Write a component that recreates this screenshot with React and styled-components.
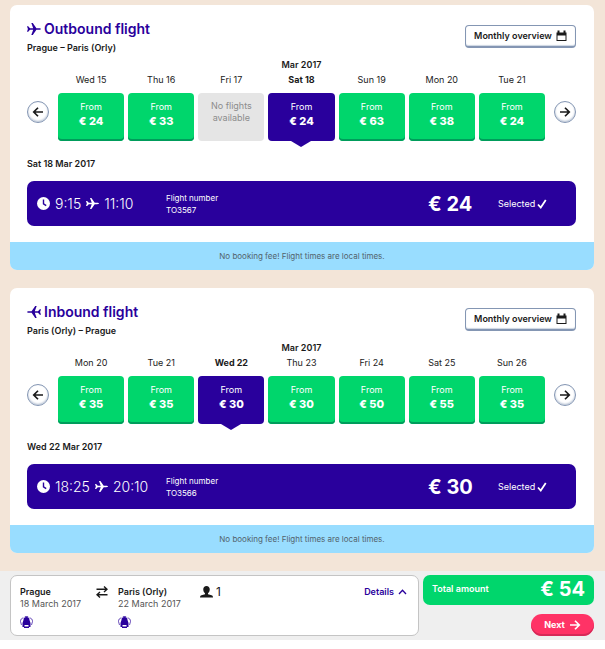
import React from "react";
import styled, { createGlobalStyle, css } from "styled-components";

const color = {
  sand: "#f3e5d8",
  indigo: "#29009c",
  green: "#00d66c",
  greenDark: "#009c5b",
  sky: "#99ddff",
  pink: "#ff3366",
  steel: "#8496b3",
  ink: "#1a1a1a",
};

const GlobalStyle = createGlobalStyle`
  * { box-sizing: border-box; }
  body {
    margin: 0;
    background: #fff;
    color: ${color.ink};
    font-family: Inter, "Open Sans", sans-serif;
    font-size: 9px;
    line-height: 12px;
  }
  button { font: inherit; color: inherit; padding: 0; border: 0; cursor: pointer; }
  h2, p { margin: 0; }
  svg { display: block; flex: none; }
`;

const Main = styled.main`
  display: flex;
  flex-direction: column;
  gap: 18px;
  padding: 5px 11px 18px 10px;
  background: ${color.sand};
`;

const Card = styled.section`
  background: #fff;
  border-radius: 7px;
  overflow: hidden;
`;

const CardBody = styled.div`
  padding: 14px 18px 16px 17px;
`;

const CardHeader = styled.header`
  display: flex;
  justify-content: space-between;
  align-items: flex-start;
`;

const Title = styled.h2`
  display: flex;
  align-items: center;
  gap: 3px;
  color: ${color.indigo};
  font-size: 14px;
  line-height: 20px;
  font-weight: 600;
`;

const Route = styled.p`
  margin-top: 3px;
  font-weight: 600;
`;

const OverviewButton = styled.button`
  display: flex;
  align-items: center;
  justify-content: center;
  gap: 4px;
  width: 111px;
  height: 23px;
  margin-top: 6px;
  background: #fff;
  border: 1px solid ${color.steel};
  border-bottom-width: 2px;
  border-radius: 4px;
  box-shadow: inset 0 -1px 1px #ccd5e2;
  font-weight: 600;
`;

const Calendar = styled.div`
  display: flex;
  align-items: flex-end;
  gap: 9px;
  margin-top: 5px;
`;

const RoundButton = styled.button`
  display: grid;
  place-items: center;
  flex: none;
  width: 22px;
  height: 22px;
  margin-bottom: 18px;
  background: #fff;
  border: 1px solid ${color.steel};
  border-radius: 50%;
  box-shadow: inset 0 -1px 2px #b5c1d3;
`;

const Days = styled.div`
  flex: 1;
  display: grid;
  grid-template-columns: repeat(7, 1fr);
  column-gap: 4px;
`;

const Month = styled.div`
  grid-column: 1 / -1;
  text-align: center;
  font-weight: 600;
  padding-bottom: 3px;
`;

const Day = styled.div`
  display: flex;
  flex-direction: column;
  gap: 7px;
  text-align: center;
  font-weight: ${(p) => (p.$selected ? 700 : 400)};
`;

const Fare = styled.button`
  position: relative;
  height: 48px;
  padding-bottom: 5px;
  border-radius: 4px;
  color: #fff;
  font-weight: 400;
  background: ${color.green};
  box-shadow: inset 0 -2px 0 ${color.greenDark};

  &:disabled {
    background: #e5e5e5;
    color: #8c8c8c;
    box-shadow: none;
    padding-bottom: 10px;
    cursor: default;
  }

  ${(p) =>
    p.$selected &&
    css`
      background: ${color.indigo};
      box-shadow: none;
      &::after {
        content: "";
        position: absolute;
        top: 100%;
        left: 50%;
        margin-left: -10px;
        border: 10px solid transparent;
        border-top: 6px solid ${color.indigo};
        border-bottom: 0;
      }
    `}
`;

const FarePrice = styled.strong`
  display: block;
  font-size: 11px;
  line-height: 16px;
  font-weight: 800;
`;

const DateLine = styled.p`
  margin-top: 17px;
  font-weight: 600;
`;

const FlightBar = styled.div`
  display: grid;
  grid-template-columns: 129px 1fr 70px 78px;
  align-items: center;
  height: 45px;
  margin-top: 11px;
  padding-left: 10px;
  border-radius: 7px;
  background: ${color.indigo};
  color: #fff;
`;

const Times = styled.div`
  display: flex;
  align-items: center;
  gap: 5px;
  font-size: 14px;
  line-height: 18px;
  font-weight: 300;
`;

const FlightNumber = styled.div`
  font-size: 8px;
`;

const FlightPrice = styled.strong`
  font-size: 20px;
  line-height: 24px;
  font-weight: 700;
`;

const Selected = styled.span`
  display: flex;
  align-items: center;
  gap: 2px;
`;

const Notice = styled.p`
  padding: 8px;
  text-align: center;
  font-size: 8px;
  background: ${color.sky};
  color: #52636c;
`;

const Footer = styled.footer`
  display: flex;
  gap: 4px;
  padding: 4px 11px 4px 10px;
  background: #efefef;
`;

const Summary = styled.div`
  flex: 1;
  display: grid;
  grid-template-columns: 76px 22px 82px 1fr auto;
  align-items: start;
  height: 61px;
  padding: 10px 11px 0 9px;
  border: 1px solid #c4c4c4;
  border-radius: 7px;
  background: #fff;
`;

const Stop = styled.div`
  white-space: nowrap;
  color: #555;
`;

const StopName = styled.strong`
  display: block;
  color: ${color.ink};
  font-weight: 600;
`;

const Bag = styled.div`
  padding-top: 6px;
`;

const Passengers = styled.div`
  display: flex;
  align-items: center;
  gap: 3px;
  font-size: 12px;
`;

const DetailsButton = styled.button`
  display: flex;
  align-items: center;
  gap: 4px;
  background: none;
  color: ${color.indigo};
  font-weight: 600;
`;

const Checkout = styled.div`
  display: flex;
  flex-direction: column;
  justify-content: space-between;
  align-items: flex-end;
  width: 171px;
`;

const Total = styled.div`
  display: flex;
  align-items: center;
  justify-content: space-between;
  width: 100%;
  height: 30px;
  padding: 0 9px 2px;
  border-radius: 7px;
  background: ${color.green};
  color: #fff;
  font-weight: 600;
`;

const NextButton = styled.button`
  display: flex;
  align-items: center;
  justify-content: center;
  gap: 4px;
  width: 63px;
  height: 22px;
  border-radius: 11px;
  background: ${color.pink};
  box-shadow: inset 0 -2px 0 #d62a58;
  color: #fff;
  font-weight: 700;
`;

const Plane = ({ size = 14, back = false }) => (
  <svg width={size} height={size} viewBox="0 0 28 28" fill="currentColor" aria-hidden="true">
    <path
      transform={back ? "translate(28 0) scale(-1 1)" : undefined}
      d="M0 8.500h2.400l3.600 4h6.400L8.600 2h3l7.200 10.300 5.400.2c2 .1 3.800.7 3.800 1.500s-1.800 1.400-3.800 1.500l-5.400.2L11.600 26h-3l3.800-10.500H6l-3.600 4H0L1.800 14z"
    />
  </svg>
);

const Clock = () => (
  <svg width="13" height="13" viewBox="0 0 24 24" aria-hidden="true">
    <circle cx="12" cy="12" r="12" fill="#fff" />
    <path d="M12 4.500v8l5 3.500" fill="none" stroke={color.indigo} strokeWidth="2.600" />
  </svg>
);

const Arrow = ({ left = false, size = 12 }) => (
  <svg width={size} height={size} viewBox="0 0 24 24" fill="none" stroke="currentColor" strokeWidth="3.400" aria-hidden="true">
    <path d={left ? "M22 12H4M12 3.500L3.500 12l8.500 8.500" : "M2 12h18M12 3.500l8.500 8.500-8.500 8.500"} />
  </svg>
);

const CalendarIcon = () => (
  <svg width="11" height="12" viewBox="0 0 22 24" aria-hidden="true">
    <path fill="currentColor" fillRule="evenodd" d="M1 5h2V1h4v4h8V1h4v4h2v17H1zM3 11v9h16v-9z" />
  </svg>
);

const Check = () => (
  <svg width="10" height="10" viewBox="0 0 20 20" fill="none" stroke="currentColor" strokeWidth="3.600" aria-hidden="true">
    <path d="M2 11l5.500 6L17.500 2" />
  </svg>
);

const Swap = () => (
  <svg width="12" height="12" viewBox="0 0 24 24" fill="none" stroke="currentColor" strokeWidth="2.800" aria-hidden="true">
    <path d="M1 6.500h20M16 1l6 5.500-6 5.500M23 17.500H3M8 12l-6 5.500L8 23" />
  </svg>
);

const Person = () => (
  <svg width="13" height="12" viewBox="0 0 26 24" fill="currentColor" aria-hidden="true">
    <path d="M13 0c4 0 6.500 2.600 6.500 6.500 0 3.500-1.500 6.500-3.500 8v2l7 2.200c2 .7 3 2.300 3 4.300H0c0-2 1-3.600 3-4.300l7-2.200v-2c-2-1.500-3.500-4.500-3.500-8C6.500 2.600 9 0 13 0z" />
  </svg>
);

const Chevron = () => (
  <svg width="9" height="6" viewBox="0 0 18 12" fill="none" stroke="currentColor" strokeWidth="2.600" aria-hidden="true">
    <path d="M2 10l7-7.500 7 7.500" />
  </svg>
);

const Backpack = () => (
  <svg width="13" height="12" viewBox="0 0 26 24" aria-hidden="true">
    <g fill="none" stroke={color.indigo} strokeWidth="1.400">
      <path d="M7 4C3 4 1 7 1 11l2 7M19 4c4 0 6 3 6 7l-2 7" />
      <path d="M10.500 3V1h5v2" />
    </g>
    <path fill={color.indigo} d="M7 8c0-4 2.500-6 6-6s6 2 6 6l2 6v8h-3v2H8v-2H5v-8z" />
    <path fill="#fff" d="M9 18h8v3H9z" />
  </svg>
);

const flights = [
  {
    title: "Outbound flight",
    route: "Prague – Paris (Orly)",
    selected: 3,
    days: [["Wed 15", 24], ["Thu 16", 33], ["Fri 17", null], ["Sat 18", 24], ["Sun 19", 63], ["Mon 20", 38], ["Tue 21", 24]],
    date: "Sat 18 Mar 2017",
    departs: "9:15",
    arrives: "11:10",
    number: "TO3567",
  },
  {
    title: "Inbound flight",
    route: "Paris (Orly) – Prague",
    back: true,
    selected: 2,
    days: [["Mon 20", 35], ["Tue 21", 35], ["Wed 22", 30], ["Thu 23", 30], ["Fri 24", 50], ["Sat 25", 55], ["Sun 26", 35]],
    date: "Wed 22 Mar 2017",
    departs: "18:25",
    arrives: "20:10",
    number: "TO3566",
  },
];

function FlightCard({ flight }) {
  return (
    <Card>
      <CardBody>
        <CardHeader>
          <div>
            <Title>
              <Plane back={flight.back} />
              {flight.title}
            </Title>
            <Route>{flight.route}</Route>
          </div>
          <OverviewButton>
            Monthly overview
            <CalendarIcon />
          </OverviewButton>
        </CardHeader>
        <Calendar>
          <RoundButton aria-label="Previous days"><Arrow left /></RoundButton>
          <Days>
            <Month>Mar 2017</Month>
            {flight.days.map(([label, price], i) => {
              const selected = i === flight.selected;
              return (
                <Day key={label} $selected={selected}>
                  <span>{label}</span>
                  <Fare $selected={selected} aria-pressed={selected} disabled={price === null}>
                    {price === null ? (
                      <>No flights<br />available</>
                    ) : (
                      <>From<FarePrice>€ {price}</FarePrice></>
                    )}
                  </Fare>
                </Day>
              );
            })}
          </Days>
          <RoundButton aria-label="Next days"><Arrow /></RoundButton>
        </Calendar>
        <DateLine>{flight.date}</DateLine>
        <FlightBar>
          <Times>
            <Clock />
            <span>{flight.departs}</span>
            <Plane size={13} />
            <span>{flight.arrives}</span>
          </Times>
          <FlightNumber>Flight number<br />{flight.number}</FlightNumber>
          <FlightPrice>€ {flight.days[flight.selected][1]}</FlightPrice>
          <Selected>Selected <Check /></Selected>
        </FlightBar>
      </CardBody>
      <Notice>No booking fee! Flight times are local times.</Notice>
    </Card>
  );
}

export default function App() {
  return (
    <>
      <GlobalStyle />
      <Main>
        {flights.map((f) => <FlightCard key={f.title} flight={f} />)}
      </Main>
      <Footer>
        <Summary>
          <Stop>
            <StopName>Prague</StopName>18 March 2017
            <Bag><Backpack /></Bag>
          </Stop>
          <Swap />
          <Stop>
            <StopName>Paris (Orly)</StopName>22 March 2017
            <Bag><Backpack /></Bag>
          </Stop>
          <Passengers><Person />1</Passengers>
          <DetailsButton>Details <Chevron /></DetailsButton>
        </Summary>
        <Checkout>
          <Total>
            Total amount
            <FlightPrice>€ 54</FlightPrice>
          </Total>
          <NextButton>Next <Arrow size={12} /></NextButton>
        </Checkout>
      </Footer>
    </>
  );
}
